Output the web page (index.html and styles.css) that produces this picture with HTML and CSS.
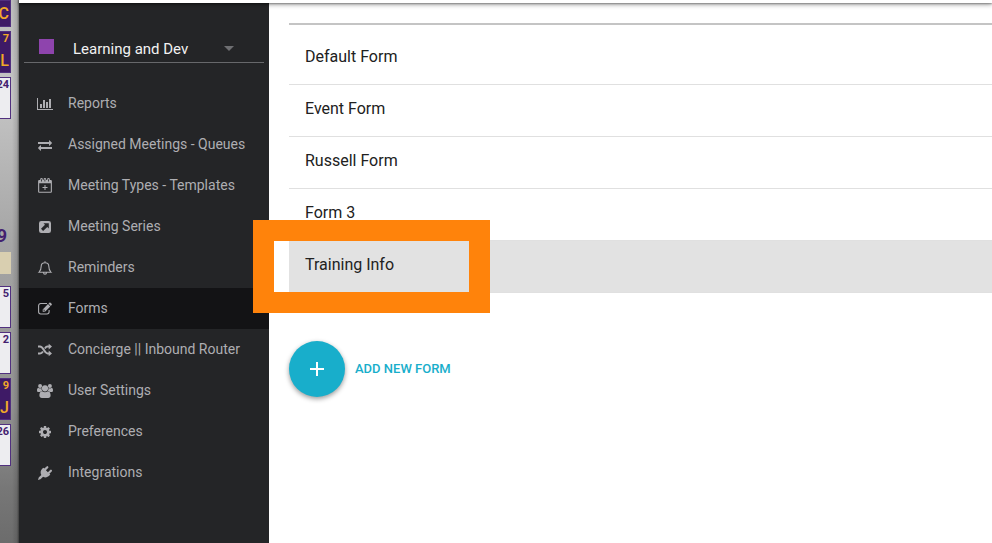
FILE: index.html
```html
<!DOCTYPE html>
<html lang="en">
<head>
<meta charset="utf-8">
<title>Forms</title>
<link rel="stylesheet" href="styles.css">
</head>
<body>
<aside class="desk">
  <div class="day day-dark day-first"><span class="big">C</span></div>
  <div class="day day-dark"><span>7</span><span class="big">L</span></div>
  <div class="day day-light"><span>24</span></div>
  <div class="month">9</div>
  <div class="note"></div>
  <div class="day day-light"><span>5</span></div>
  <div class="day day-light"><span>2</span></div>
  <div class="day day-dark"><span>9</span><span class="big">J</span></div>
  <div class="day day-light"><span>26</span></div>
</aside>
<div class="app">
  <header class="topbar"></header>
  <div class="columns">
    <div class="sidebar">
      <button class="team" type="button">
        <span class="swatch"></span>
        <span class="team-name">Learning and Dev</span>
        <span class="caret"></span>
      </button>
      <nav class="nav">
        <a href="#"><svg width="16" height="14" viewBox="0 0 2048 1792"><path d="M640 896v512h-256v-512h256zm384-512v1024h-256v-1024h256zm1024 1152v128h-2048v-1536h128v1408h1920zm-640-896v768h-256v-768h256zm384-384v1152h-256v-1152h256z"/></svg>Reports</a>
        <a href="#"><svg width="14" height="14" viewBox="0 0 1792 1792"><path d="M1792 1184v192q0 13-9.500 22.500t-22.500 9.500h-1376v192q0 13-9.500 22.500t-22.500 9.500q-12 0-24-10l-319-320q-9-9-9-22 0-14 9-23l320-320q9-9 23-9 13 0 22.500 9.500t9.500 22.500v192h1376q13 0 22.500 9.500t9.500 22.500zm0-544q0 14-9 23l-320 320q-9 9-23 9-13 0-22.500-9.500t-9.500-22.500v-192h-1376q-13 0-22.500-9.500t-9.500-22.500v-192q0-13 9.500-22.500t22.500-9.500h1376v-192q0-14 9-23t23-9q12 0 24 10l319 319q9 9 9 23z"/></svg>Assigned Meetings - Queues</a>
        <a href="#"><svg width="14" height="15" viewBox="0 0 14 15"><path fill-rule="evenodd" d="M1.200 2H2.200V1.300a1.300 1.300 0 0 1 2.600 0V2h.8V1.300a1.300 1.300 0 0 1 2.600 0V2H9.200V1.300a1.300 1.300 0 0 1 2.600 0V2h1a1.100 1.100 0 0 1 1.100 1.100v10.600a1.100 1.100 0 0 1-1.100 1.100H1.200A1.100 1.100 0 0 1 .1 13.700V3.100A1.100 1.100 0 0 1 1.200 2zM1.200 5.300v8.400h11.600V5.300zM3.100 1.200v2.300h.8V1.200zM6.500 1.200v2.300h.8V1.200zM10.100 1.200v2.300h.8V1.200zM6.500 7h1v2h2v1h-2v2h-1v-2h-2V9h2z"/></svg>Meeting Types - Templates</a>
        <a href="#"><svg width="12" height="12" viewBox="0 0 12 12"><path fill-rule="evenodd" d="M2.300 0h7.400A2.300 2.300 0 0 1 12 2.300v7.400A2.300 2.300 0 0 1 9.700 12H2.300A2.300 2.300 0 0 1 0 9.700V2.300A2.300 2.300 0 0 1 2.300 0zM4.500 2.200 6 3.700 2 7.800l2.100 2.100L8.300 6l1.500 1.500V2.200z"/></svg>Meeting Series</a>
        <a href="#"><svg class="line" width="14" height="14" viewBox="0 0 14 14"><path d="M1 11.300C2.800 9.600 3.200 8 3.200 5.300 3.200 3 4.800 1.700 7 1.700S10.800 3 10.800 5.300c0 2.700.4 4.300 2.200 6zM7 .2v1.500M5.500 11.500a1.500 1.700 0 0 0 3 0"/></svg>Reminders</a>
        <a href="#" class="current" aria-current="page"><svg width="14" height="13" viewBox="0 0 14 13"><path class="stroke" d="M9 1.500H2.800A2.200 2.200 0 0 0 .6 3.700v6.100A2.200 2.200 0 0 0 2.800 12h6.100a2.200 2.200 0 0 0 2.200-2.200V8"/><path fill-rule="evenodd" d="M11.300.8a.9.900 0 0 1 1.300 0l1 1a.9.900 0 0 1 0 1.300l-.8.800-2.300-2.300zM10 2.100l2.300 2.300-5.300 5.300H4.700V7.400zM5.500 7.800v1h.8v.7l.6-.6L6 7.300z"/></svg>Forms</a>
        <a href="#"><svg width="14" height="12" viewBox="0 0 14 12"><path class="thick" d="M0 2.600h2C5.600 2.600 6.200 9.400 9.600 9.400H11.500M0 9.400h2c1.300 0 2.200-.8 2.900-2M6.900 4.500C7.600 3.400 8.400 2.600 9.600 2.600H11.500"/><path d="M10.700-.3l3.300 2.900-3.300 2.900zM10.700 6.500l3.300 2.900-3.300 2.900z"/></svg>Concierge || Inbound Router</a>
        <a href="#"><svg width="16" height="14" viewBox="0 0 16 14"><circle cx="3.100" cy="2" r="2"/><circle cx="12.900" cy="2" r="2"/><circle cx="8" cy="4.300" r="3.100"/><path d="M1.200 3.800c.8.700 2.300.8 3.200.3 0 1.200.3 2.200.9 2.900-1.100.1-1.700.5-2.200 1.100H1.600C.6 8.100 0 7.500 0 6.500 0 5.400.3 4.100 1.200 3.800zM14.800 3.800c-.8.700-2.300.8-3.200.3 0 1.200-.3 2.200-.9 2.900 1.100.1 1.700.5 2.200 1.100h1.500c1 0 1.600-.6 1.600-1.600 0-1.100-.3-2.400-1.200-2.700zM5.100 7.300c1.700 1.200 4.100 1.200 5.800 0 2 .1 2.700 1.900 2.700 4.300 0 1.500-1 2.400-2.400 2.400H4.800c-1.400 0-2.400-.9-2.400-2.400 0-2.400.7-4.200 2.700-4.300z"/></svg>User Settings</a>
        <a href="#"><svg width="14" height="14" viewBox="0 0 1792 1792"><path d="M1152 896q0-106-75-181t-181-75-181 75-75 181 75 181 181 75 181-75 75-181zm512-109v222q0 12-8 23t-20 13l-185 28q-19 54-39 91 35 50 107 138 10 12 10 25t-9 23q-27 37-99 108t-94 71q-12 0-26-9l-138-108q-44 23-91 38-16 136-29 186-7 28-36 28h-222q-14 0-24.500-8.500t-11.500-21.500l-28-184q-49-16-90-37l-141 107q-10 9-25 9-14 0-25-11-126-114-165-168-7-10-7-23 0-12 8-23 15-21 51-66.500t54-70.500q-27-50-41-99l-183-27q-13-2-21-12.500t-8-23.500v-222q0-12 8-23t19-13l186-28q14-46 39-92-40-57-107-138-10-12-10-24 0-10 9-23 26-36 98.500-107.500t94.500-71.500q13 0 26 10l138 107q44-23 91-38 16-136 29-186 7-28 36-28h222q14 0 24.500 8.500t11.500 21.500l28 184q49 16 90 37l142-107q9-9 24-9 13 0 25 10 129 119 165 170 7 8 7 22 0 12-8 23-15 21-51 66.500t-54 70.500q26 50 41 98l183 28q13 2 21 12.500t8 23.500z"/></svg>Preferences</a>
        <a href="#"><svg width="14" height="14" viewBox="0 0 14 14"><path d="M8.600.4a1 1 0 0 1 1.500 1.500L7.900 4.200l2 2 2.300-2.300a1 1 0 0 1 1.500 1.500l-2.300 2.300.9.900-.9 1c-1.900 1.900-4.300 2.300-6.300 1.100L3 12.800c-.7.600-2 .8-3 1.200.3-1 .5-2.300 1.200-3l2.100-2.100C2.100 6.900 2.500 4.500 4.400 2.600l1-.9.900.9z"/></svg>Integrations</a>
      </nav>
    </div>
    <main class="content">
      <ul class="forms">
        <li><a href="#">Default Form</a></li>
        <li><a href="#">Event Form</a></li>
        <li><a href="#">Russell Form</a></li>
        <li><a href="#">Form 3</a></li>
        <li class="selected"><a href="#">Training Info</a><span class="marker"></span></li>
      </ul>
      <button class="add" type="button">
        <span class="fab"><svg width="14" height="14" viewBox="0 0 14 14"><path d="M6 0h2v6h6v2H8v6H6V8H0V6h6z"/></svg></span>
        <span>ADD NEW FORM</span>
      </button>
    </main>
  </div>
</div>
</body>
</html>
```
FILE: styles.css
```css
* { box-sizing: border-box; }
body {
  margin: 0;
  height: 100vh;
  display: flex;
  overflow: hidden;
  background: #fff;
  color: #212121;
  font: 16px/24px Roboto, "Liberation Sans", sans-serif;
}
a { color: inherit; text-decoration: none; }
button { border: 0; padding: 0; background: none; font: inherit; text-align: left; cursor: pointer; }

/* desktop strip */
.desk {
  flex: 0 0 19px;
  overflow: hidden;
  display: flex;
  flex-direction: column;
  gap: 4px;
  background:
    linear-gradient(90deg, transparent 12px, rgba(0,0,0,.12) 17px, rgba(0,0,0,.45) 19px),
    linear-gradient(#bcbcbc, #c4c4c4 18%, #a5a5a5 45%, #929292 75%, #777 90%, #6c6c6c);
  font: bold 11px/12px Roboto, sans-serif;
}
.day {
  flex: 0 0 42px;
  width: 11px;
  overflow: hidden;
  display: flex;
  flex-direction: column;
  align-items: flex-end;
  padding: 1px 1px 0 0;
  border: 1px solid #51307f;
  border-left: 0;
}
.day-first { flex-basis: 27px; }
.day-dark { background: #3e1a66; color: #f0a828; }
.day-light { background: #ededf0; color: #43206f; }
.big { font-size: 16px; line-height: 24px; font-weight: 500; }
.day-dark span + .big { padding-top: 4px; }
.month { margin-top: 101px; width: 7px; display: flex; justify-content: flex-end; font-size: 18px; line-height: 24px; color: #43206f; }
.note { flex: 0 0 22px; width: 11px; margin-bottom: 8px; background: #d9cfb0; }

.app { flex: 1; min-width: 0; display: flex; flex-direction: column; }
.topbar { flex: 0 0 3px; position: relative; background: #fff; box-shadow: 0 1px 5px rgba(0,0,0,.5), 0 1px 2px rgba(0,0,0,.35); }
.columns { flex: 1; display: flex; }

.sidebar { flex: 0 0 250px; background: #242527; color: #aeaeb2; }
.team {
  display: flex;
  align-items: center;
  width: 240px;
  height: 60px;
  margin: 0 5px 20px;
  padding: 32px 30px 0 15px;
  border-bottom: 1px solid #67686b;
  color: #f2f2f2;
  font-size: 15px;
}
.swatch { width: 15px; height: 15px; margin: 0 19px 4px 0; background: #8e44ad; }
.team-name { flex: 1; }
.caret { border: 5px solid transparent; border-top-color: #6e6f72; border-bottom: 0; }

.nav { font-size: 14px; line-height: 41px; }
.nav a { display: grid; grid-template-columns: 18px 1fr; column-gap: 14px; align-items: center; padding-left: 17px; }
.nav svg { justify-self: center; fill: #aeaeb2; overflow: visible; }
.nav .line, .nav .stroke { fill: none; stroke: #aeaeb2; stroke-width: 1.1; }
.nav .thick { fill: none; stroke: #aeaeb2; stroke-width: 2; }
.nav .current { background: #131315; }

.content { flex: 1; min-width: 0; padding: 20px 0 0 20px; }
.forms { margin: 0; padding: 8px 0 0; list-style: none; border-top: 2px solid #c4c4c4; }
.forms li { position: relative; height: 52px; border-bottom: 1px solid #e0e0e0; }
.forms a { display: block; padding: 12px 16px; }
.forms .selected { background: #e2e2e2; }
.marker { position: absolute; left: -36px; top: -21px; width: 237px; height: 93px; border: 21px solid #ff830b; pointer-events: none; }

.add { display: flex; align-items: center; gap: 10px; margin-top: 48px; color: #18aecb; font-size: 13px; font-weight: 500; }
.fab { display: flex; align-items: center; justify-content: center; width: 56px; height: 56px; border-radius: 50%; background: #18aecb; box-shadow: 0 2px 5px rgba(0,0,0,.4); }
.fab svg { fill: #fff; }
```
